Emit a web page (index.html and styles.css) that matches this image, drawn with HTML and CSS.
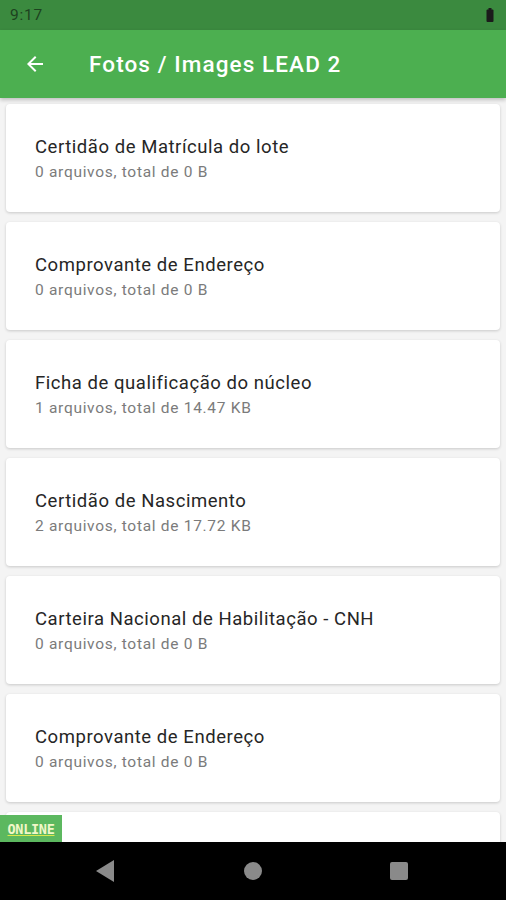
FILE: index.html
```html
<!DOCTYPE html>
<html lang="pt">
<head>
    <meta charset="UTF-8">
    <meta name="viewport" content="width=device-width, initial-scale=1.0">
    <title>Fotos / Images LEAD 2</title>
    <link rel="stylesheet" href="styles.css">
</head>
<body>
    <div class="phone">
        <div class="status">
            <span class="clock">9:17</span>
            <svg class="battery" width="8" height="14" viewBox="0 0 8 14">
                <rect x="2.5" y="0" width="3" height="2" fill="#1b1b1b"/>
                <rect x="0.5" y="1.5" width="7" height="12.5" rx="1" fill="#1b1b1b"/>
            </svg>
        </div>
        <header class="appbar">
            <svg class="back" width="24" height="24" viewBox="0 0 24 24">
                <path d="M20 11H7.83l5.59-5.59L12 4l-8 8 8 8 1.41-1.41L7.83 13H20v-2z" fill="#fff"/>
            </svg>
            <h1>Fotos / Images LEAD 2</h1>
        </header>
        <section class="list">
            <div class="card">
                <div class="title">Certidão de Matrícula do lote</div>
                <div class="sub">0 arquivos, total de 0 B</div>
            </div>
            <div class="card">
                <div class="title">Comprovante de Endereço</div>
                <div class="sub">0 arquivos, total de 0 B</div>
            </div>
            <div class="card">
                <div class="title">Ficha de qualificação do núcleo</div>
                <div class="sub">1 arquivos, total de 14.47 KB</div>
            </div>
            <div class="card">
                <div class="title">Certidão de Nascimento</div>
                <div class="sub">2 arquivos, total de 17.72 KB</div>
            </div>
            <div class="card">
                <div class="title">Carteira Nacional de Habilitação - CNH</div>
                <div class="sub">0 arquivos, total de 0 B</div>
            </div>
            <div class="card">
                <div class="title">Comprovante de Endereço</div>
                <div class="sub">0 arquivos, total de 0 B</div>
            </div>
            <div class="card"></div>
            <span class="online">ONLINE</span>
        </section>
        <nav class="navbar">
            <svg width="20" height="22" viewBox="0 0 20 22"><path d="M18 0v22L0 11z" fill="#8a8a8a"/></svg>
            <svg width="20" height="20" viewBox="0 0 20 20"><circle cx="10" cy="10" r="9" fill="#8a8a8a"/></svg>
            <svg width="20" height="20" viewBox="0 0 20 20"><rect x="1" y="1" width="18" height="18" rx="2" fill="#8a8a8a"/></svg>
        </nav>
    </div>
</body>
</html>
```

FILE: styles.css
```css
*{
    padding: 0;
    margin: 0;
    box-sizing: border-box;
}
body
{
    overflow: hidden;
    font-family: Roboto, "Noto Sans", sans-serif;
}
.phone
{
    width: 100%;
    height: 100vh;
    display: flex;
    flex-direction: column;
    background-color: #f4f4f4;
}
.status
{
    height: 30px;
    flex-shrink: 0;
    background-color: #3b8a3f;
    display: flex;
    align-items: center;
    justify-content: space-between;
    padding: 0 12px 0 10px;
}
.clock
{
    font-size: 15.5px;
    letter-spacing: 0.8px;
    color: #1d4220;
}
.appbar
{
    height: 68px;
    flex-shrink: 0;
    background-color: #4caf50;
    display: flex;
    align-items: center;
    padding-left: 23px;
    gap: 42px;
    box-shadow: 0 2px 4px rgba(0, 0, 0, 0.22);
    z-index: 1;
}
h1
{
    font-size: 22.5px;
    font-weight: 500;
    color: white;
    letter-spacing: 1.1px;
}
.list
{
    flex: 1;
    overflow: hidden;
    padding: 6px 6px 0 6px;
    display: flex;
    flex-direction: column;
    gap: 10px;
    position: relative;
}
.card
{
    flex-shrink: 0;
    height: 108px;
    background-color: white;
    border-radius: 4px;
    box-shadow: 0 1px 3px rgba(0, 0, 0, 0.18);
    padding: 31px 29px 0 29px;
}
.title
{
    font-size: 18.5px;
    letter-spacing: 0.55px;
    color: #262626;
    line-height: 24px;
}
.sub
{
    font-size: 15.5px;
    letter-spacing: 0.7px;
    color: #7b7b7b;
    line-height: 20px;
    margin-top: 3px;
}
.online
{
    position: absolute;
    left: 0;
    bottom: 0;
    width: 62px;
    height: 27px;
    background-color: #5cb85f;
    color: #f1f7c8;
    font-family: "DejaVu Sans Mono", monospace;
    font-weight: bold;
    font-size: 13.5px;
    letter-spacing: -0.3px;
    text-decoration: underline;
    text-decoration-color: #d8e84a;
    display: flex;
    align-items: center;
    justify-content: center;
}
.navbar
{
    height: 58px;
    flex-shrink: 0;
    background-color: black;
    display: flex;
    align-items: center;
    justify-content: space-between;
    padding: 0 97px 0 96px;
}
```
